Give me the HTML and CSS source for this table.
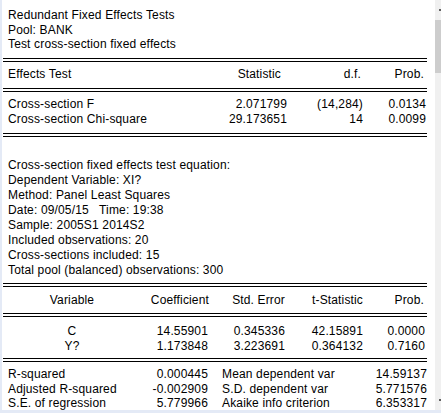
FILE: index.html
```html
<!DOCTYPE html>
<html>
<head>
<meta charset="utf-8">
<link rel="stylesheet" href="styles.css">
</head>
<body>
<div class="frame">
  <div class="left-edge"></div>
  <div class="pane">
    <div class="sheet">
      <div class="title">
        <div>Redundant Fixed Effects Tests</div>
        <div>Pool: BANK</div>
        <div>Test cross-section fixed effects</div>
      </div>
      <div class="rule"></div>
      <div class="t1 head">
        <div class="lbl">Effects Test</div>
        <div class="num h-stat">Statistic</div>
        <div class="num h-df">d.f.</div>
        <div class="num h-prob">Prob.</div>
        <div></div>
      </div>
      <div class="rule"></div>
      <div class="t1 rows">
        <div class="lbl">Cross-section F</div>
        <div class="num">2.071799</div>
        <div class="num">(14,284)</div>
        <div class="num">0.0134</div>
        <div></div>
        <div class="lbl">Cross-section Chi-square</div>
        <div class="num">29.173651</div>
        <div class="num">14</div>
        <div class="num">0.0099</div>
        <div></div>
      </div>
      <div class="rule"></div>
      <div class="info">
        <div class="line">Cross-section fixed effects test equation:</div>
        <div class="line">Dependent Variable: XI?</div>
        <div class="line">Method: Panel Least Squares</div>
        <div class="line">Date: 09/05/15   Time: 19:38</div>
        <div class="line">Sample: 2005S1 2014S2</div>
        <div class="line">Included observations: 20</div>
        <div class="line">Cross-sections included: 15</div>
        <div class="line">Total pool (balanced) observations: 300</div>
      </div>
      <div class="rule"></div>
      <div class="t2 head">
        <div class="ctr">Variable</div>
        <div class="num">Coefficient</div>
        <div class="num">Std. Error</div>
        <div class="num">t-Statistic</div>
        <div class="num h-p2">Prob.</div>
        <div></div>
      </div>
      <div class="rule"></div>
      <div class="t2 rows">
        <div class="ctr">C</div>
        <div class="num v-coef">14.55901</div>
        <div class="num">0.345336</div>
        <div class="num">42.15891</div>
        <div class="num">0.0000</div>
        <div></div>
        <div class="ctr">Y?</div>
        <div class="num v-coef">1.173848</div>
        <div class="num">3.223691</div>
        <div class="num">0.364132</div>
        <div class="num">0.7160</div>
        <div></div>
      </div>
      <div class="rule"></div>
      <div class="stats">
        <div class="lbl">R-squared</div>
        <div class="num v1">0.000445</div>
        <div class="lbl2">Mean dependent var</div>
        <div class="num">14.59137</div>
        <div class="lbl">Adjusted R-squared</div>
        <div class="num v1">-0.002909</div>
        <div class="lbl2">S.D. dependent var</div>
        <div class="num">5.771576</div>
        <div class="lbl">S.E. of regression</div>
        <div class="num v1">5.779966</div>
        <div class="lbl2">Akaike info criterion</div>
        <div class="num">6.353317</div>
      </div>
    </div>
  </div>
  <div class="scrollbar">
    <div class="arrow arrow-up"></div>
    <div class="thumb"></div>
    <div class="track-fill"></div>
    <div class="arrow arrow-down"></div>
  </div>
</div>
<div class="bottom-edge"></div>
</body>
</html>
```
FILE: styles.css
```css
html, body {
  margin: 0;
  padding: 0;
  background: #ffffff;
  overflow: hidden;
}
body {
  width: 441px;
  height: 413px;
  font-family: "Liberation Sans", Arial, sans-serif;
  font-size: 12px;
  letter-spacing: 0.15px;
  color: #000;
}
.frame {
  display: flex;
  height: 410px;
}
.left-edge {
  width: 2px;
  background: #e4eaf6;
}
.pane {
  flex: 1;
  background: #fff;
  overflow: hidden;
}
.sheet {
  margin-left: 1px;
  width: 424px;
}
.title {
  padding: 8px 0 6.5px 5px;
  line-height: 14.5px;
}
.rule {
  height: 2px;
  border-top: 1px solid #000;
  border-bottom: 1px solid #000;
}
.t1 {
  display: grid;
  grid-template-columns: 197px 87px 76px 63px 1px;
}
.t1.head {
  padding: 5px 0 6px;
  line-height: 15px;
}
.t1.rows {
  padding: 5px 0 7px;
  line-height: 14.5px;
}
.lbl {
  padding-left: 5px;
  white-space: nowrap;
}
.num {
  text-align: right;
  white-space: nowrap;
}
.h-stat { padding-right: 6px; }
.h-df { padding-right: 2px; }
.h-prob { padding-right: 2px; }
.info {
  padding: 21px 0 5px 5px;
  line-height: 15px;
}
.line {
  white-space: pre;
}
.t2 {
  display: grid;
  grid-template-columns: 138px 68px 76px 78px 62px 2px;
}
.t2.head {
  padding: 6px 0 5px;
  line-height: 15px;
}
.t2.rows {
  padding: 7px 0 5px;
  line-height: 14.5px;
}
.ctr {
  text-align: center;
}
.h-p2 { padding-right: 1px; }
.v-coef { padding-right: 1px; }
.stats {
  display: grid;
  grid-template-columns: 120px 86px 130px 88px;
  padding-top: 5px;
  line-height: 14.5px;
}
.v1 { padding-right: 1px; }
.lbl2 {
  padding-left: 13px;
  white-space: nowrap;
}
.scrollbar {
  width: 6px;
  background: #f0f0f0;
  display: flex;
  flex-direction: column;
}
.arrow {
  height: 20px;
  position: relative;
}
.arrow::after {
  content: "";
  position: absolute;
  right: 0;
  width: 2px;
  height: 2px;
  background: #606060;
}
.arrow-up::after { top: 9px; }
.arrow-down::after { top: 9px; }
.thumb {
  height: 53px;
  background: #cdcdcd;
}
.track-fill {
  flex: 1;
}
.bottom-edge {
  height: 3px;
  background: #e4eaf6;
}
```
